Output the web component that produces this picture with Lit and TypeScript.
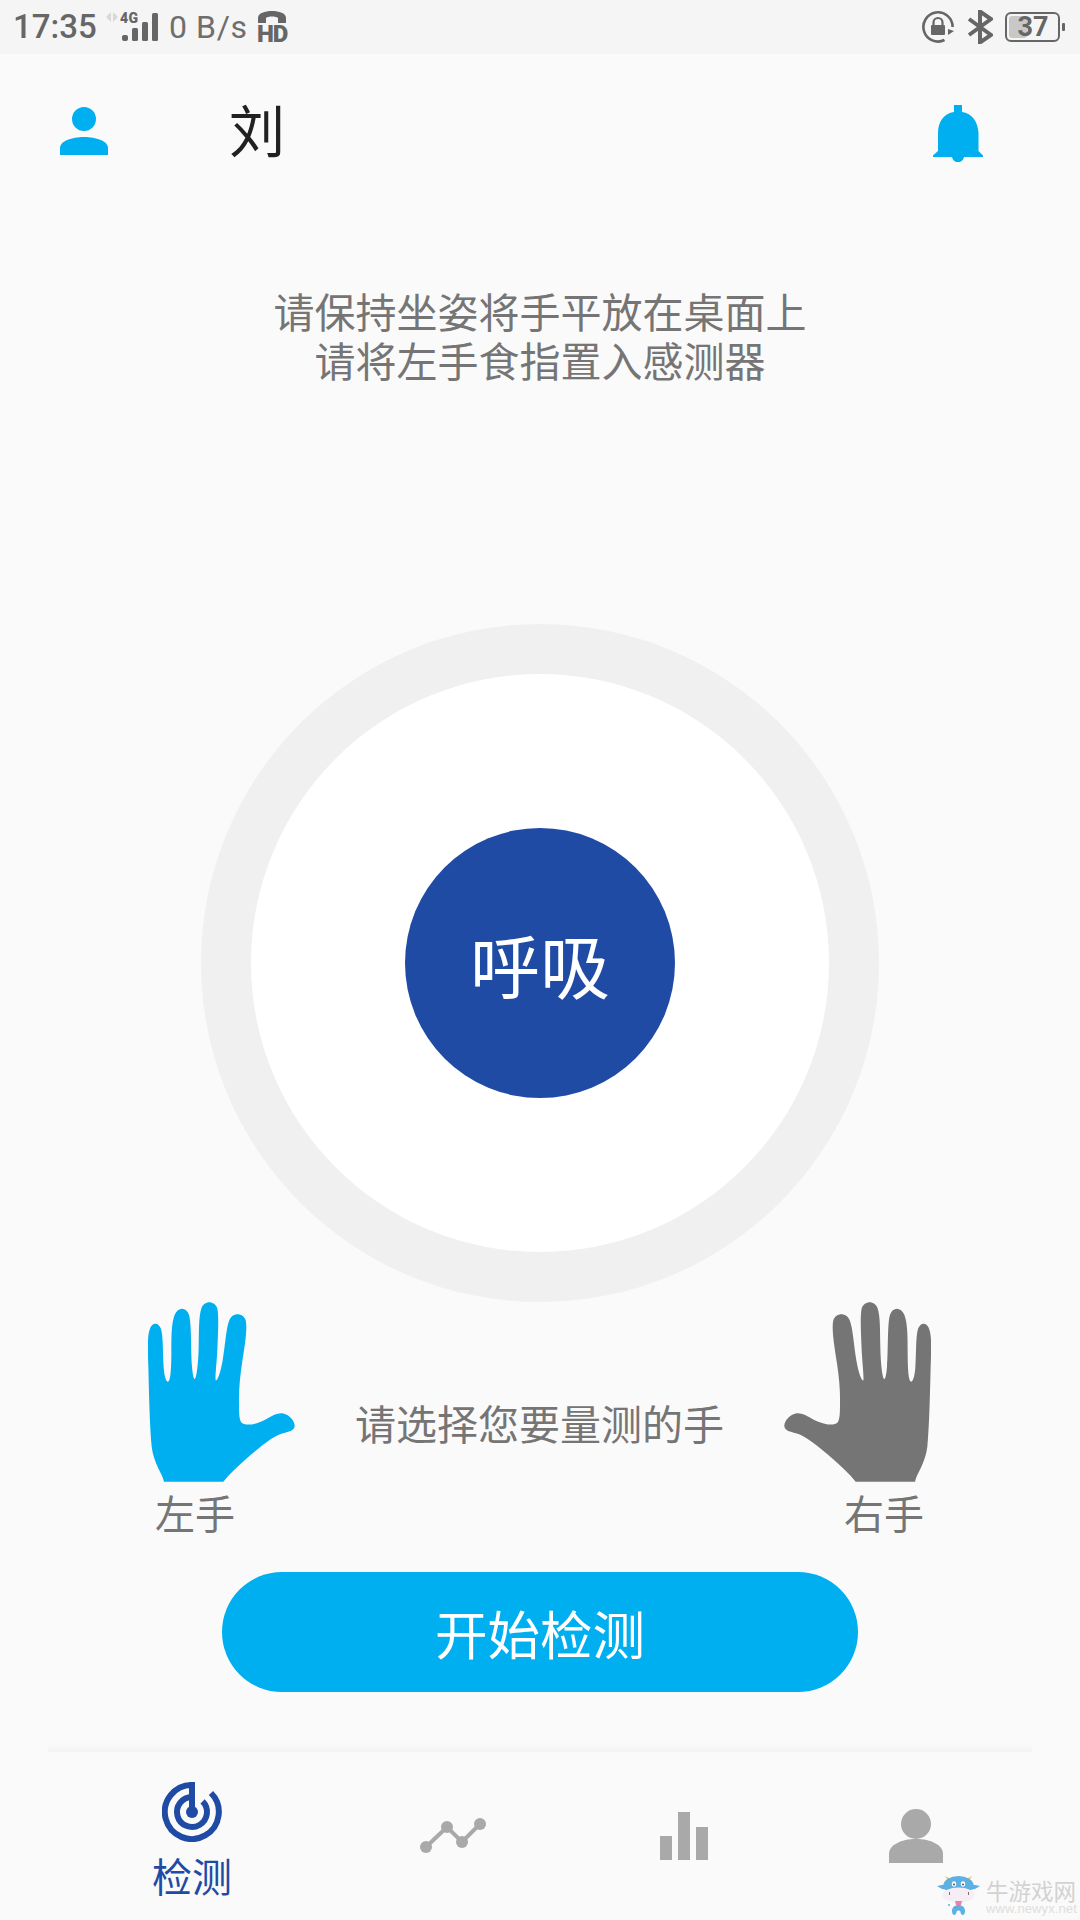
import { LitElement, html, css, svg } from "lit";
import { customElement } from "lit/decorators.js";

const handPath = "M103 605C98 580 72 550 66 500C60 440 58 340 56 260C54 200 53 170 60 148C66 126 86 124 94 146C101 170 99 220 102 262C104 290 110 305 115 305C122 303 125 270 125 220C125 170 125 130 135 104C145 80 170 80 178 104C186 130 183 210 187 260C189 283 192 297 195 297C201 294 206 250 207 200C208 150 207 110 215 85C223 60 255 60 263 85C268 110 265 160 263 210C261 250 256 290 258 301C264 300 272 280 279 240C287 190 290 140 299 120C308 96 340 96 348 120C354 145 345 200 337 250C331 290 327 330 328 370C328 395 328 420 336 428C345 436 370 435 395 424C420 412 437 398 458 399C480 402 496 424 495 438C493 452 478 454 460 459C430 468 400 492 345 540C325 558 300 580 281 605Z";

@customElement("app-root")
export class AppRoot extends LitElement {
  static styles = css`
    :host { display: block; width: 1080px; height: 1920px; background: #fafafa; font-family: "Noto Sans CJK SC", "Noto Sans", sans-serif; color: #757575; }
    .page { position: relative; display: flex; flex-direction: column; height: 1920px; overflow: hidden; }
    svg { display: block; flex: none; }

    .status { height: 54px; flex: none; background: #f5f5f5; display: flex; align-items: center; padding: 0 15px 0 13px; color: #666; font-family: Roboto, sans-serif; }
    .time { font-size: 33px; font-weight: 500; width: 90px; line-height: 54px; }
    .net { position: relative; width: 66px; height: 54px; flex: none; }
    .fourg { position: absolute; left: 17px; top: 10px; font-size: 14px; line-height: 16px; font-weight: 900; letter-spacing: 0.5px; }
    .speed { font-size: 32px; font-weight: 400; width: 88px; color: #6e6e6e; line-height: 54px; letter-spacing: 0.6px; white-space: nowrap; }
    .hd { position: relative; width: 30px; height: 54px; flex: none; }
    .hd span { position: absolute; left: 0; top: 23px; width: 30px; text-align: center; font-size: 24px; line-height: 22px; font-weight: 900; letter-spacing: -1px; }
    .spacer { flex: 1; }
    .bt { margin-left: 12px; }
    .battery { position: relative; margin-left: 12px; width: 60px; height: 54px; flex: none; }
    .battery span { position: absolute; left: 12px; top: 0; width: 32px; text-align: center; font-size: 27px; font-weight: 700; line-height: 54px; color: #666; }

    .header { height: 158px; flex: none; display: flex; align-items: center; padding: 0 97px 0 60px; }
    .me { margin-bottom: 4px; }
    .name { font-size: 56px; line-height: 64px; color: #212121; margin-left: 121px; margin-bottom: 10px; flex: 1; }

    .tips { font-size: 41px; line-height: 49px; text-align: center; margin-top: 74px; }

    .ring { flex: none; align-self: center; margin-top: 240px; width: 678px; height: 678px; border-radius: 50%; background: #f0f0f0; display: flex; align-items: center; justify-content: center; }
    .inner { width: 578px; height: 578px; border-radius: 50%; background: #fff; display: flex; align-items: center; justify-content: center; }
    .breath { width: 270px; height: 270px; border-radius: 50%; background: #1f4ba5; color: #fff; font-size: 70px; display: flex; align-items: center; justify-content: center; }

    .hands { display: flex; padding: 0 149px 0 148px; flex: none; }
    .hand { width: 147px; display: flex; flex-direction: column; flex: none; }
    .hand.right { align-items: flex-end; }
    .hand.right svg { transform: scaleX(-1); }
    .hand-label { font-size: 40px; line-height: 48px; margin: 6px 7px 0; }
    .choose { flex: 1; text-align: center; font-size: 41px; line-height: 48px; padding-top: 96px; white-space: nowrap; }

    .start { flex: none; align-self: center; margin-top: 36px; width: 636px; height: 120px; border-radius: 60px; background: #00aff0; color: #fff; font-size: 52.500px; display: flex; align-items: center; justify-content: center; }

    .rule { flex: none; margin: 52px 48px 0; height: 8px; background: linear-gradient(#fafafa, #f3f3f3); }
    .nav { display: grid; grid-template-columns: 260px 262px 200px 264px; padding-left: 62px; flex: 1; }
    .tab { display: flex; flex-direction: column; align-items: center; }
    .tab.t0 { padding-top: 30px; }
    .tab.t1 { padding-top: 66px; }
    .tab.t2 { padding-top: 60px; }
    .tab.t3 { padding-top: 57px; }
    .tab-label { font-size: 40px; line-height: 48px; margin-top: 9px; color: #1f4ba5; }

    .mark { position: absolute; left: 937px; top: 1875px; display: flex; gap: 6px; }
    .mark-text { display: flex; flex-direction: column; color: #d2d2d2; }
    .mark-cn { font-size: 22.500px; line-height: 24px; white-space: nowrap; margin-top: 3px; }
    .mark-en { font-family: "Liberation Sans", sans-serif; font-size: 13px; line-height: 13px; color: #dedede; letter-spacing: 0.1px; white-space: nowrap; }
  `;

  private hand(fill: string) {
    return svg`<svg width="147" height="180" viewBox="55 66 441 539"><path d=${handPath} fill=${fill}></path></svg>`;
  }

  render() {
    return html`<div class="page">
      <div class="status">
        <div class="time">17:35</div>
        <div class="net">
          <svg width="66" height="54" viewBox="0 0 66 54">
            <path d="M8 12L3 17L8 22ZM10 12L15 17L10 22Z" fill="#d8d8d8"></path>
            <rect x="19" y="35" width="6" height="6" rx="2" fill="#666"></rect>
            <rect x="29" y="28" width="6" height="13" rx="1.500" fill="#666"></rect>
            <rect x="39" y="22" width="6" height="19" rx="1.500" fill="#666"></rect>
            <rect x="49" y="13" width="6" height="28" rx="1.500" fill="#666"></rect>
          </svg>
          <span class="fourg">4G</span>
        </div>
        <div class="speed">0 B/s</div>
        <div class="hd">
          <svg width="30" height="54" viewBox="0 0 30 54">
            <path d="M1 23V18C1 13 8 11 15 11C22 11 29 13 29 18V23H21V18C19 16 11 16 9 18V23Z" fill="#666"></path>
          </svg>
          <span>HD</span>
        </div>
        <div class="spacer"></div>
        <svg width="34" height="34" viewBox="0 0 34 34">
          <path d="M31.600 17A14.600 14.600 0 1 0 23.500 30" fill="none" stroke="#666" stroke-width="2.600"></path>
          <path d="M27 19L33 21L27 25Z" fill="#666"></path>
          <rect x="10" y="15" width="14" height="10" rx="1" fill="#666"></rect>
          <path d="M12.500 15V12.500A4.500 4.500 0 0 1 21.500 12.500V15" fill="none" stroke="#666" stroke-width="2.200"></path>
        </svg>
        <svg class="bt" width="26" height="34" viewBox="0 0 26 34">
          <path d="M2 9L24 25L13 32.500V1.500L24 9L2 25" fill="none" stroke="#666" stroke-width="4"></path>
        </svg>
        <div class="battery">
          <svg width="60" height="54" viewBox="0 0 60 54">
            <rect x="1" y="13" width="53" height="28" rx="5" fill="none" stroke="#666" stroke-width="2"></rect>
            <rect x="4" y="16" width="18" height="22" rx="3" fill="#c8c8c8"></rect>
            <rect x="57" y="23" width="3" height="8" rx="1" fill="#666"></rect>
          </svg>
          <span>37</span>
        </div>
      </div>

      <div class="header">
        <svg class="me" width="48" height="48" viewBox="0 0 48 48">
          <circle cx="24" cy="12" r="12" fill="#00aff0"></circle>
          <path d="M0 48V41C0 34 12 30 24 30C36 30 48 34 48 41V48Z" fill="#00aff0"></path>
        </svg>
        <div class="name">刘</div>
        <svg width="50" height="57" viewBox="0 0 50 57">
          <path d="M21 0H29V7C39 8 45 17 45.500 28V46L50 50.500V52H0V50.500L5 46V28C5 17 11 8 21 7Z" fill="#00aff0"></path>
          <path d="M19 52H31C30 59 20 59 19 52Z" fill="#00aff0"></path>
        </svg>
      </div>

      <div class="tips">请保持坐姿将手平放在桌面上<br />请将左手食指置入感测器</div>

      <div class="ring"><div class="inner"><div class="breath">呼吸</div></div></div>

      <div class="hands">
        <div class="hand">${this.hand("#00aff0")}<div class="hand-label">左手</div></div>
        <div class="choose">请选择您要量测的手</div>
        <div class="hand right">${this.hand("#757575")}<div class="hand-label">右手</div></div>
      </div>

      <div class="start">开始检测</div>

      <div class="rule"></div>
      <div class="nav">
        <div class="tab t0">
          <svg width="60" height="60" viewBox="0 0 60 60">
            <path d="M49 11A27 27 0 1 1 30 3" fill="none" stroke="#1f4ba5" stroke-width="6"></path>
            <path d="M40.600 19.400A15 15 0 1 1 30 15" fill="none" stroke="#1f4ba5" stroke-width="6"></path>
            <rect x="27" y="0" width="6" height="30" fill="#1f4ba5"></rect>
            <circle cx="30" cy="30" r="6" fill="#1f4ba5"></circle>
          </svg>
          <div class="tab-label">检测</div>
        </div>
        <div class="tab t1">
          <svg width="66" height="36" viewBox="0 0 66 36">
            <path d="M6 29L27 9L42 24L60 6" fill="none" stroke="#a9a9a9" stroke-width="4"></path>
            <circle cx="6" cy="29" r="6" fill="#a9a9a9"></circle>
            <circle cx="27" cy="9" r="6" fill="#a9a9a9"></circle>
            <circle cx="42" cy="24" r="6" fill="#a9a9a9"></circle>
            <circle cx="60" cy="6" r="6" fill="#a9a9a9"></circle>
          </svg>
        </div>
        <div class="tab t2">
          <svg width="48" height="48" viewBox="0 0 48 48">
            <rect x="0" y="24" width="12" height="24" fill="#a9a9a9"></rect>
            <rect x="18" y="0" width="12" height="48" fill="#a9a9a9"></rect>
            <rect x="36" y="15" width="12" height="33" fill="#a9a9a9"></rect>
          </svg>
        </div>
        <div class="tab t3">
          <svg width="54" height="54" viewBox="0 0 54 54">
            <circle cx="27" cy="15" r="15" fill="#a9a9a9"></circle>
            <path d="M0 54V45C0 36 12 30 27 30C42 30 54 36 54 45V54Z" fill="#a9a9a9"></path>
          </svg>
        </div>
      </div>

      <div class="mark">
        <svg width="43" height="41" viewBox="0 0 43 41">
          <path d="M8 1L14 4L11 6ZM35 1L29 4L32 6Z" fill="#f4c845"></path>
          <path d="M0 11L10 9L11 15L5 14ZM43 11L33 9L32 15L38 14Z" fill="#5cb0e2"></path>
          <ellipse cx="21.500" cy="10" rx="15" ry="9" fill="#5cb0e2"></ellipse>
          <ellipse cx="21.500" cy="20" rx="16" ry="7.500" fill="#f6eef6"></ellipse>
          <ellipse cx="17" cy="9" rx="2.200" ry="2.800" fill="#fff"></ellipse>
          <ellipse cx="26" cy="9" rx="2.200" ry="2.800" fill="#fff"></ellipse>
          <circle cx="17" cy="9.500" r="1" fill="#555"></circle>
          <circle cx="26" cy="9.500" r="1" fill="#555"></circle>
          <rect x="12" y="17" width="1" height="3" fill="#8a6a70"></rect>
          <rect x="31" y="17" width="1" height="3" fill="#8a6a70"></rect>
          <path d="M18 26H25L24 30H19Z" fill="#ee7fa6"></path>
          <path d="M15 36C15 28 28 28 28 36C28 41 24 41 23.500 37C23 35 20 35 19.500 37C19 41 15 41 15 36Z" fill="#5cb0e2"></path>
          <circle cx="12" cy="30" r="1" fill="#5cb0e2"></circle>
        </svg>
        <div class="mark-text">
          <div class="mark-cn">牛游戏网</div>
          <div class="mark-en">www.newyx.net</div>
        </div>
      </div>
    </div>`;
  }
}
